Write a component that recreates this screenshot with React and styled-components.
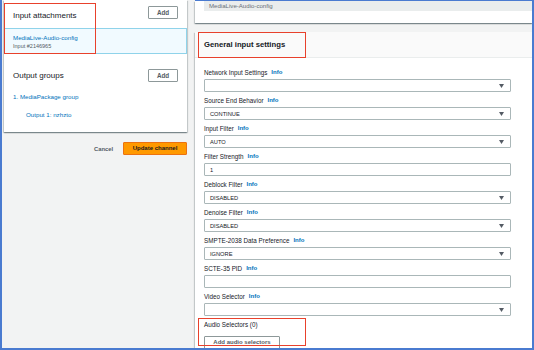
import React from 'react';
import styled, { createGlobalStyle } from 'styled-components';

const GlobalStyle = createGlobalStyle`
  html, body { margin: 0; padding: 0; background: #f2f3f3; }
  body { font-family: "Liberation Sans", Arial, sans-serif; color: #16191f; }
  * { box-sizing: border-box; }
`;

const Frame = styled.div`
  width: 534px;
  height: 350px;
  overflow: hidden;
  display: flex;
  gap: 8px;
  background: #f2f3f3;
  border: 2px solid #4a7bd0;
  border-top: none;
  padding-left: 2px;
`;

const LeftColumn = styled.div`
  width: 183px;
  flex: none;
  display: flex;
  flex-direction: column;
`;

const Card = styled.div`
  position: relative;
  background: #fff;
  box-shadow: 0 1px 1px 0 rgba(0, 28, 36, 0.3), 1px 1px 1px 0 rgba(0, 28, 36, 0.15),
    -1px 1px 1px 0 rgba(0, 28, 36, 0.15);
`;

const LeftCard = styled(Card)`
  padding-bottom: 12px;
`;

const SectionHeader = styled.div`
  display: flex;
  justify-content: space-between;
  align-items: flex-start;
  height: 13px;
  padding: 0 9px;
  margin-top: ${(p) => p.$top}px;
`;

const SectionTitle = styled.div`
  font-size: 8px;
  line-height: 13px;
  color: #16191f;
  margin-top: ${(p) => p.$drop || 0}px;
`;

const SmallButton = styled.button`
  width: ${(p) => p.$w}px;
  height: 13px;
  padding: 0;
  background: #fff;
  border: 1px solid #8d9899;
  border-radius: 1px;
  font-family: inherit;
  font-weight: bold;
  font-size: ${(p) => p.$fs || 6.3}px;
  color: #545b64;
  line-height: 11px;
  text-align: center;
`;

const SelectedItem = styled.div`
  margin-top: 9px;
  height: 26px;
  background: #f1faff;
  border: 1px solid #8fd3ea;
  padding: 3.5px 8px 0;
  display: flex;
  flex-direction: column;
  gap: 1px;
`;

const Link = styled.div`
  color: #0073bb;
  font-size: ${(p) => p.$fs || 6.2}px;
  line-height: ${(p) => p.$lh || 9}px;
  padding-left: ${(p) => p.$indent || 0}px;
  margin-top: ${(p) => p.$top || 0}px;
`;

const SubText = styled.div`
  color: #545b64;
  font-size: 5.5px;
  line-height: 7px;
`;

const ActionRow = styled.div`
  display: flex;
  justify-content: flex-end;
  align-items: center;
  gap: 10px;
  margin-top: 10px;
`;

const CancelLink = styled.div`
  font-weight: bold;
  font-size: 5.8px;
  color: #545b64;
`;

const PrimaryButton = styled.button`
  width: 64px;
  height: 13px;
  padding: 0;
  background: #ff9900;
  border: 1px solid #ec7211;
  border-radius: 1px;
  font-family: inherit;
  font-weight: bold;
  font-size: 6px;
  color: #16191f;
  line-height: 11px;
`;

const Highlight = styled.div`
  position: absolute;
  left: ${(p) => p.$l}px;
  top: ${(p) => p.$t}px;
  width: ${(p) => p.$w}px;
  height: ${(p) => p.$h}px;
  border: 1.5px solid #e8412c;
  pointer-events: none;
`;

const RightColumn = styled.div`
  flex: 1;
  min-width: 0;
  display: flex;
  flex-direction: column;
  gap: 9px;
  border-top: 1px solid #4a7bd0;
`;

const TopCard = styled(Card)`
  padding: 0 0 12px 9px;
`;

const ReadonlyInput = styled.div`
  height: 10px;
  background: #eaeded;
  padding-left: 5px;
  font-size: 6.1px;
  line-height: 9px;
  color: #687078;
`;

const SettingsCard = styled(Card)`
  flex: 1;
`;

const SettingsHeader = styled.div`
  height: 26px;
  background: #fafafa;
  border-bottom: 1px solid #eaeded;
  padding-left: 9px;
  font-weight: bold;
  font-size: 7.7px;
  line-height: 25px;
  color: #16191f;
`;

const SettingsBody = styled.div`
  padding: 9px 0 0 9px;
  width: 316px;
`;

const Field = styled.div`
  margin-bottom: 3px;
`;

const LabelRow = styled.div`
  display: flex;
  align-items: center;
  gap: 4px;
  height: 10px;
  font-size: 6.3px;
  color: #16191f;
`;

const Info = styled.span`
  color: #0073bb;
  font-weight: bold;
  font-size: 6px;
`;

const Control = styled.div`
  margin-top: 2px;
  height: 13px;
  border: 1px solid #aab7b8;
  border-radius: 1px;
  background: #fff;
  padding: 0 6px 0 5px;
  display: flex;
  align-items: center;
  justify-content: space-between;
  font-size: 5.7px;
  color: #16191f;
`;

const AudioSection = styled.div`
  position: relative;
  margin-top: 1px;
`;

const AudioButtonWrap = styled.div`
  margin-top: 1px;
`;

const Caret = () => (
  <svg width="5" height="4" viewBox="0 0 5 4">
    <polygon points="0,0 5,0 2.5,4" fill="#545b64" />
  </svg>
);

const fields = [
  { label: 'Network Input Settings', value: '', select: true },
  { label: 'Source End Behavior', value: 'CONTINUE', select: true },
  { label: 'Input Filter', value: 'AUTO', select: true },
  { label: 'Filter Strength', value: '1', select: false },
  { label: 'Deblock Filter', value: 'DISABLED', select: true },
  { label: 'Denoise Filter', value: 'DISABLED', select: true },
  { label: 'SMPTE-2038 Data Preference', value: 'IGNORE', select: true },
  { label: 'SCTE-35 PID', value: '', select: false },
  { label: 'Video Selector', value: '', select: true },
];

export default function App() {
  return (
    <>
      <GlobalStyle />
      <Frame>
        <LeftColumn>
          <LeftCard>
            <SectionHeader $top={6}>
              <SectionTitle $drop={2.5}>Input attachments</SectionTitle>
              <SmallButton $w={30}>Add</SmallButton>
            </SectionHeader>
            <SelectedItem>
              <Link>MediaLive-Audio-config</Link>
              <SubText>Input #2146965</SubText>
            </SelectedItem>
            <SectionHeader $top={15}>
              <SectionTitle>Output groups</SectionTitle>
              <SmallButton $w={30}>Add</SmallButton>
            </SectionHeader>
            <Link $indent={9} $lh={10} $top={10}>1. MediaPackage group</Link>
            <Link $indent={22} $lh={10} $top={8}>Output 1: nzhzto</Link>
            <Highlight $l={0} $t={3} $w={92} $h={51} />
          </LeftCard>
          <ActionRow>
            <CancelLink>Cancel</CancelLink>
            <PrimaryButton>Update channel</PrimaryButton>
          </ActionRow>
        </LeftColumn>
        <RightColumn>
          <TopCard>
            <ReadonlyInput>MediaLive-Audio-config</ReadonlyInput>
          </TopCard>
          <SettingsCard>
            <SettingsHeader>General input settings</SettingsHeader>
            <Highlight $l={3} $t={0} $w={108} $h={26} />
            <SettingsBody>
              {fields.map((f) => (
                <Field key={f.label}>
                  <LabelRow>
                    <span>{f.label}</span>
                    <Info>Info</Info>
                  </LabelRow>
                  <Control>
                    <span>{f.value}</span>
                    {f.select && <Caret />}
                  </Control>
                </Field>
              ))}
              <AudioSection>
                <LabelRow>Audio Selectors (0)</LabelRow>
                <AudioButtonWrap>
                  <SmallButton $w={76} $fs={6}>Add audio selectors</SmallButton>
                </AudioButtonWrap>
                <Highlight $l={-6} $t={-1} $w={108} $h={28} />
              </AudioSection>
            </SettingsBody>
          </SettingsCard>
        </RightColumn>
      </Frame>
    </>
  );
}
